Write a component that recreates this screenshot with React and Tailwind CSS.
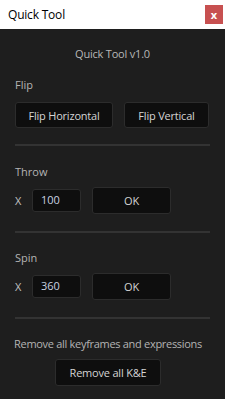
const Btn = ({ children, className }) => (
    <button
        className={
            "bg-[#0e0e0e] border border-[#2c2c2c] rounded-[3px] text-[#d4d4d4] text-[11px] tracking-[-0.2px] leading-none " +
            className
        }
    >
        {children}
    </button>
);

const Sep = () => <div className="h-[2px] bg-[#333333] mx-[15px]" />;

const Row = ({ label, value, top }) => (
    <div className={top}>
        <p className="px-[15px] text-[11px] leading-none text-[#b4b4b4]">{label}</p>
        <div className="flex items-center px-[15px] mt-[10px] mb-[17px]">
            <span className="text-[11px] leading-none text-[#c0c0c0] w-[17px]">X</span>
            <div className="w-[49px] h-[23px] bg-[#0e0e0e] border border-[#2c2c2c] rounded-[3px] text-[11px] text-[#c9d2e0] flex items-center pl-[8px]">
                {value}
            </div>
            <Btn className="ml-[11px] w-[79px] h-[27px]">OK</Btn>
        </div>
    </div>
);

const App = () => {
    return (
        <div
            className="w-[225px] h-[399px] bg-[#1e1e1e] flex flex-col"
            style={{ fontFamily: '"Open Sans", "Noto Sans", sans-serif' }}
        >
            {/* title bar */}
            <div className="h-[29px] shrink-0 bg-white flex items-center justify-between pl-[8px] pr-[2px]">
                <span className="text-[12px] tracking-[-0.2px] text-black leading-none">Quick Tool</span>
                <div className="w-[18px] h-[19px] bg-[#c75050] flex items-center justify-center text-white text-[11px] font-bold leading-none">
                    x
                </div>
            </div>

            <p className="text-center text-[11px] tracking-[-0.2px] leading-none text-[#b8b8b8] mt-[19px]">
                Quick Tool v1.0
            </p>

            <p className="px-[15px] text-[11px] leading-none text-[#b4b4b4] mt-[20px]">Flip</p>
            <div className="flex px-[15px] gap-[11px] mt-[12px] mb-[16px]">
                <Btn className="w-[98px] h-[26px]">Flip Horizontal</Btn>
                <Btn className="w-[85px] h-[26px]">Flip Vertical</Btn>
            </div>
            <Sep />

            <Row label="Throw" value="100" top="mt-[20px]" />
            <Sep />
            <Row label="Spin" value="360" top="mt-[19px]" />
            <Sep />

            <div className="pr-[9px] flex flex-col items-center">
                <p className="text-[11px] tracking-[-0.3px] leading-none text-[#b4b4b4] mt-[19px]">
                    Remove all keyframes and expressions
                </p>
                <Btn className="mt-[10px] w-[106px] h-[27px]">Remove all K&amp;E</Btn>
            </div>
        </div>
    );
};

export default App;
